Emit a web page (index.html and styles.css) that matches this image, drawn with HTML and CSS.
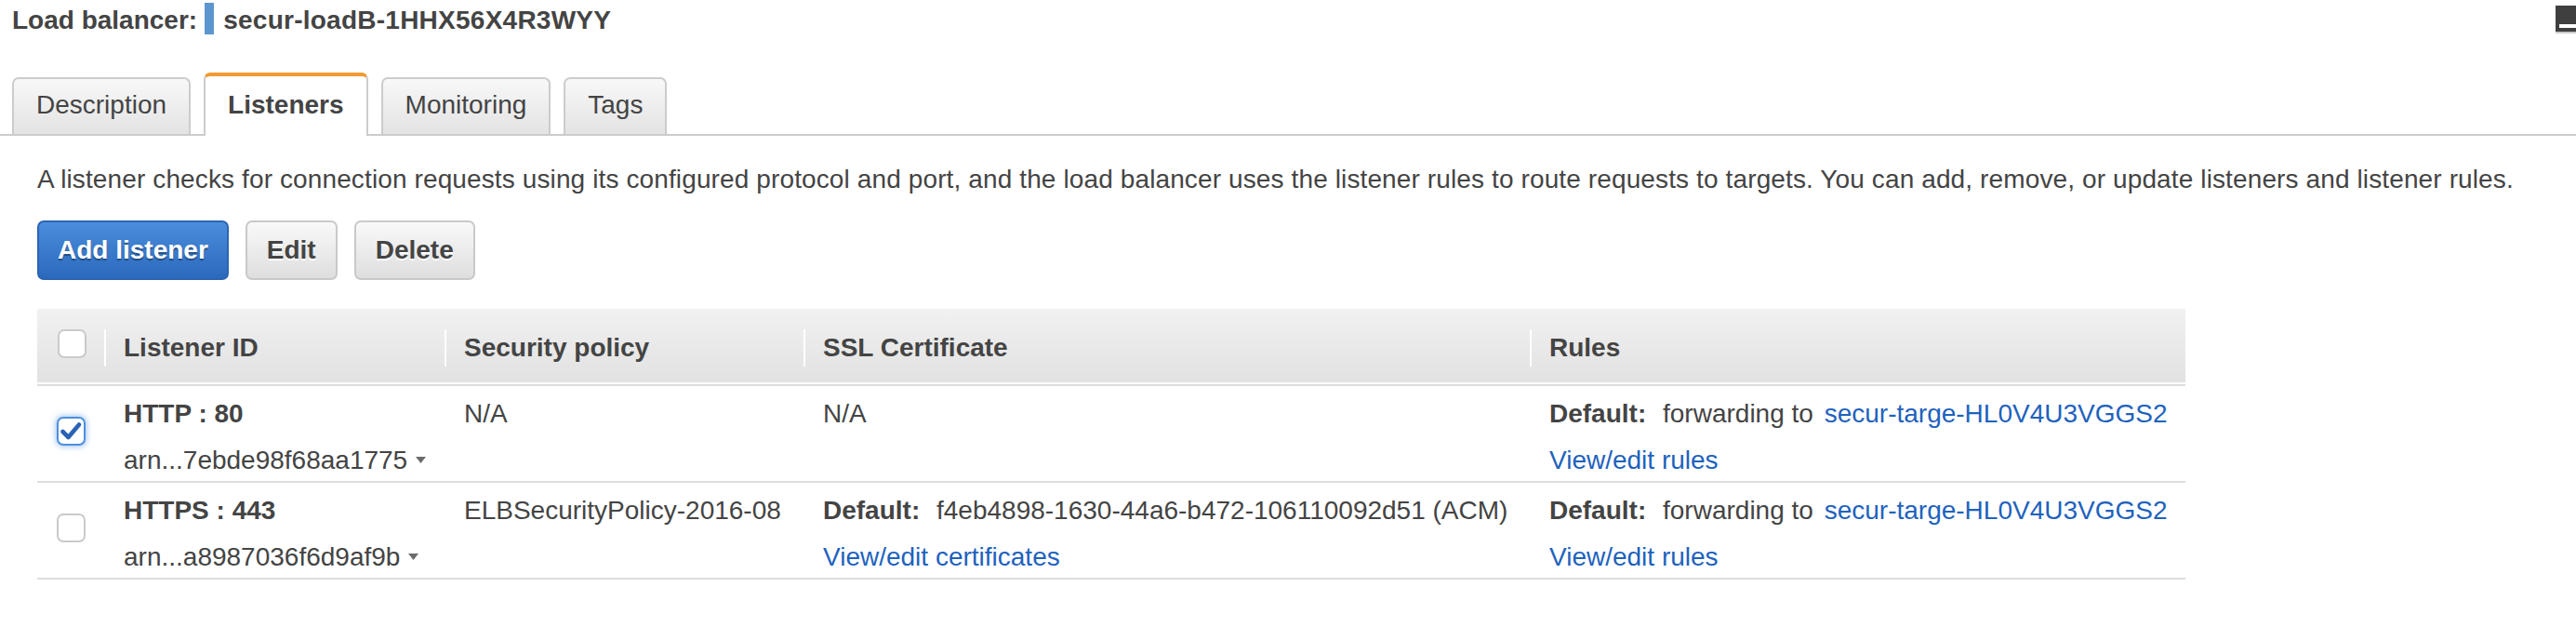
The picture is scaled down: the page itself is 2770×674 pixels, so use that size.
FILE: index.html
```html
<!DOCTYPE html>
<html>
<head>
<meta charset="utf-8">
<title>Load balancer listeners</title>
<link rel="stylesheet" href="styles.css">
</head>
<body>
<div class="page">
  <div class="title-row">
    <h1 class="title">Load balancer:<span class="title-mark"></span><span class="title-name">secur-loadB-1HHX56X4R3WYY</span></h1>
    <svg class="panel-icon" width="22" height="30" viewBox="0 0 22 30" aria-hidden="true">
      <rect x="0" y="0" width="22" height="28" fill="#3f3f3f"/>
      <rect x="4" y="20" width="18" height="4" fill="#ffffff"/>
      <rect x="0" y="28" width="22" height="2" fill="#c9c9c9"/>
    </svg>
  </div>

  <div class="tabs">
    <div class="tab">Description</div>
    <div class="tab tab-active">Listeners</div>
    <div class="tab">Monitoring</div>
    <div class="tab">Tags</div>
  </div>

  <div class="tab-body">
    <p class="intro">A listener checks for connection requests using its configured protocol and port, and the load balancer uses the listener rules to route requests to targets. You can add, remove, or update listeners and listener rules.</p>

    <div class="actions">
      <button class="btn btn-primary">Add listener</button>
      <button class="btn">Edit</button>
      <button class="btn">Delete</button>
    </div>

    <div class="grid">
      <div class="grid-head">
        <div class="hcell hcheck"><span class="checkbox"></span></div>
        <div class="hcell"><div class="hlabel">Listener ID</div></div>
        <div class="hcell"><div class="hlabel">Security policy</div></div>
        <div class="hcell"><div class="hlabel">SSL Certificate</div></div>
        <div class="hcell"><div class="hlabel">Rules</div></div>
      </div>

      <div class="grid-row">
        <div class="cell ccheck">
          <span class="checkbox checked">
            <svg width="27" height="27" viewBox="0 0 27 27" aria-hidden="true"><path d="M4.5 14 L10.5 20 L22 6.5" fill="none" stroke="#2a62b4" stroke-width="4.6" stroke-linecap="round" stroke-linejoin="round"/></svg>
          </span>
        </div>
        <div class="cell">
          <div class="line strong">HTTP : 80</div>
          <div class="line">arn...7ebde98f68aa1775<svg class="caret" width="11" height="7" viewBox="0 0 11 7" aria-hidden="true"><path d="M0 0 H11 L5.5 7 Z" fill="#6b6b6b"/></svg></div>
        </div>
        <div class="cell">
          <div class="line">N/A</div>
        </div>
        <div class="cell">
          <div class="line">N/A</div>
        </div>
        <div class="cell">
          <div class="line"><span class="label">Default:</span> forwarding to <a class="link tg" href="#">secur-targe-HL0V4U3VGGS2</a></div>
          <div class="line"><a class="link" href="#">View/edit rules</a></div>
        </div>
      </div>

      <div class="grid-row">
        <div class="cell ccheck">
          <span class="checkbox"></span>
        </div>
        <div class="cell">
          <div class="line strong">HTTPS : 443</div>
          <div class="line">arn...a8987036f6d9af9b<svg class="caret" width="11" height="7" viewBox="0 0 11 7" aria-hidden="true"><path d="M0 0 H11 L5.5 7 Z" fill="#6b6b6b"/></svg></div>
        </div>
        <div class="cell">
          <div class="line">ELBSecurityPolicy-2016-08</div>
        </div>
        <div class="cell">
          <div class="line"><span class="label">Default:</span> f4eb4898-1630-44a6-b472-106110092d51 (ACM)</div>
          <div class="line"><a class="link" href="#">View/edit certificates</a></div>
        </div>
        <div class="cell">
          <div class="line"><span class="label">Default:</span> forwarding to <a class="link tg" href="#">secur-targe-HL0V4U3VGGS2</a></div>
          <div class="line"><a class="link" href="#">View/edit rules</a></div>
        </div>
      </div>
    </div>
  </div>
</div>
</body>
</html>
```

FILE: styles.css
```css
* {
  box-sizing: border-box;
}

html, body {
  margin: 0;
  padding: 0;
  background: #ffffff;
}

body {
  font-family: "Liberation Sans", Arial, Helvetica, sans-serif;
  font-size: 28px;
  line-height: 40px;
  color: #444444;
}

.page {
  width: 2770px;
}

/* ---------- title ---------- */
.title-row {
  display: flex;
  justify-content: space-between;
  align-items: flex-start;
  padding: 2px 0 0 13px;
}

.title {
  margin: 0;
  font-size: 28px;
  line-height: 40px;
  font-weight: bold;
  color: #444444;
}

.title-mark {
  display: inline-block;
  width: 10px;
  height: 34px;
  margin: 0 10px 0 8px;
  vertical-align: -6px;
  background: #5d95cf;
}

.title-name {
  letter-spacing: 0.25px;
}

.panel-icon {
  display: block;
  flex: none;
  margin-top: 4px;
}

/* ---------- tabs ---------- */
.tabs {
  display: flex;
  align-items: flex-end;
  gap: 14px;
  margin-top: 36px;
  padding-left: 13px;
  border-bottom: 2px solid #cccccc;
}

.tab {
  padding: 8px 24px 11px;
  border: 2px solid #cccccc;
  border-bottom: none;
  border-radius: 7px 7px 0 0;
  background: linear-gradient(#f8f8f8, #e3e3e3);
  color: #444444;
  line-height: 40px;
}

.tab-active {
  padding: 11px 24px 13px;
  margin-bottom: -2px;
  border-top: 4px solid #f39a32;
  background: #ffffff;
  font-weight: bold;
}

/* ---------- body ---------- */
.tab-body {
  padding-left: 40px;
}

.intro {
  margin: 27px 0 0;
  line-height: 40px;
  letter-spacing: 0.12px;
}

.actions {
  display: flex;
  gap: 18px;
  margin-top: 24px;
}

.btn {
  font-family: inherit;
  font-size: 28px;
  font-weight: bold;
  line-height: 40px;
  padding: 10px 21px;
  border: 2px solid #c9c9c9;
  border-radius: 7px;
  color: #444444;
  background: linear-gradient(#f9f9f9, #dedede);
  text-shadow: 0 2px 0 #ffffff;
  cursor: pointer;
}

.btn-primary {
  padding: 10px 20px;
  border-color: #2c64b2;
  color: #ffffff;
  background: linear-gradient(#4b8ddb, #2b69bd);
  text-shadow: 0 2px 1px rgba(0, 0, 0, 0.35);
}

/* ---------- grid ---------- */
.grid {
  width: 2310px;
  margin-top: 31px;
}

.grid-head,
.grid-row {
  display: grid;
  grid-template-columns: 72px 366px 386px 781px 705px;
}

.grid-head {
  background: linear-gradient(#f1f1f1, #e1e1e1);
  border-bottom: 2px solid #dddddd;
}

.hcell {
  padding: 22px 0 17px;
  border-bottom: 2px solid #fbfbfb;
  font-weight: bold;
}

.hlabel {
  border-left: 2px solid #ffffff;
  padding-left: 19px;
  line-height: 40px;
}

.hcheck {
  padding-left: 22px;
}

.checkbox {
  display: block;
  width: 31px;
  height: 31px;
  border: 2px solid #cacaca;
  border-radius: 7px;
  background: #ffffff;
}

.checkbox.checked {
  border-color: #4d8fe0;
  box-shadow: 0 0 6px 1px rgba(77, 143, 224, 0.55);
  padding: 0;
}

.checkbox.checked svg {
  display: block;
}

.grid-row {
  border-bottom: 2px solid #dddddd;
}

.cell {
  padding: 10px 0 2px 21px;
}

.ccheck {
  padding: 33px 0 0 21px;
}

.line {
  line-height: 40px;
  white-space: nowrap;
}

.line + .line {
  margin-top: 10px;
}

.strong {
  font-weight: bold;
}

.label {
  font-weight: bold;
  margin-right: 10px;
}

.link {
  color: #1e62bd;
  text-decoration: none;
}

.tg {
  margin-left: 4px;
}

.caret {
  margin-left: 9px;
  vertical-align: 6px;
}
```
